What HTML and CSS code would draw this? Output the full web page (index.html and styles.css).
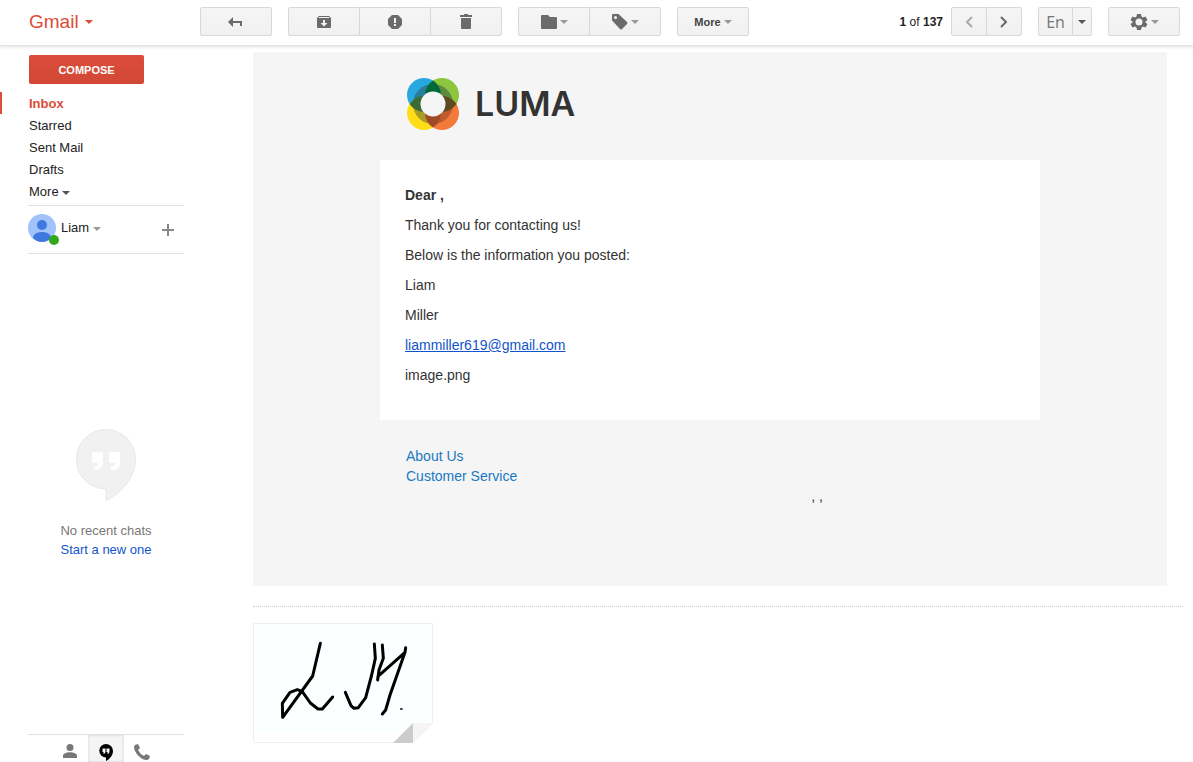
FILE: index.html
```
<!DOCTYPE html>
<html lang="en">
<head>
    <meta charset="UTF-8">
    <meta name="viewport" content="width=device-width, initial-scale=1.0">
    <title>Gmail</title>
    <link rel="stylesheet" href="styles.css">
</head>
<body>
    <!-- Top toolbar -->
    <header class="toolbar">
        <button class="brand">Gmail <span class="caret"></span></button>

        <div class="group">
            <button class="btn" aria-label="Back">
                <svg width="16" height="10" viewBox="0 0 16 10"><path d="M0 5l5-5v4h9v5h-2V6H5v4z"/></svg>
            </button>
        </div>
        <div class="group">
            <button class="btn" aria-label="Archive">
                <svg width="14" height="12" viewBox="0 0 14 12"><path fill-rule="evenodd" d="M2 0h10l2 2v9q0 1-1 1H1q-1 0-1-1V2zM2 1L1.500 2h11L12 1zM6 4v3H3.500L7 10.500 10.500 7H8V4z"/></svg>
            </button>
            <button class="btn" aria-label="Report spam">
                <svg width="14" height="14" viewBox="0 0 14 14"><path fill-rule="evenodd" d="M4 0h6l4 4v6l-4 4H4l-4-4V4zM6 3v5h2V3zM6 9v2h2V9z"/></svg>
            </button>
            <button class="btn" aria-label="Delete">
                <svg width="12" height="15" viewBox="0 0 12 15"><path d="M4 0h4v1h4v2H0V1h4zM1 4h10v10q0 1-1 1H2q-1 0-1-1z"/></svg>
            </button>
        </div>
        <div class="group">
            <button class="btn" aria-label="Move to">
                <svg width="16" height="14" viewBox="0 0 16 14"><path d="M1 0h6l2 2h6q1 0 1 1v10q0 1-1 1H1q-1 0-1-1V1q0-1 1-1z"/></svg>
                <span class="caret"></span>
            </button>
            <button class="btn" aria-label="Labels">
                <svg width="16" height="16" viewBox="0 0 16 16"><path fill-rule="evenodd" d="M1 0h5.500L15 8q1 1 0 2l-5 5q-1 1-2 0L.500 7Q0 6.500 0 6V1q0-1 1-1zM3.500 2a1.500 1.500 0 1 0 0 3 1.500 1.500 0 0 0 0-3z"/></svg>
                <span class="caret"></span>
            </button>
        </div>
        <div class="group">
            <button class="btn">More <span class="caret"></span></button>
        </div>

        <span class="counter"><b>1</b> of <b>137</b></span>
        <div class="group">
            <button class="btn small faded" aria-label="Newer">
                <svg width="8" height="12" viewBox="0 0 8 12"><path class="line" d="M7 1L2 6l5 5"/></svg>
            </button>
            <button class="btn small" aria-label="Older">
                <svg width="8" height="12" viewBox="0 0 8 12"><path class="line" d="M1 1l5 5-5 5"/></svg>
            </button>
        </div>
        <div class="group">
            <button class="btn lang">En</button>
            <button class="btn tiny" aria-label="Input tools"><span class="caret dark"></span></button>
        </div>
        <div class="group">
            <button class="btn" aria-label="Settings">
                <svg width="18" height="18" viewBox="0 0 18 18"><path fill-rule="evenodd" d="M7 1h4l.5 2.500 1.500 1 2.500-1 2 3.500-2 1.500v1l2 1.500-2 3.500-2.500-1-1.500 1L11 17H7l-.5-2.500-1.500-1-2.500 1L.500 11l2-1.500v-1L.500 7l2-3.500 2.500 1 1.500-1zM9 5.500a3.500 3.500 0 1 0 0 7 3.500 3.500 0 0 0 0-7z"/></svg>
                <span class="caret"></span>
            </button>
        </div>
    </header>

    <div class="page">
        <!-- Left column -->
        <aside class="sidebar">
            <button class="compose">COMPOSE</button>
            <nav class="folders">
                <a class="active" href="#">Inbox</a>
                <a href="#">Starred</a>
                <a href="#">Sent Mail</a>
                <a href="#">Drafts</a>
                <a href="#">More <span class="caret dark"></span></a>
            </nav>

            <div class="profile">
                <svg class="avatar" width="32" height="32" viewBox="0 0 32 32">
                    <circle cx="14" cy="14" r="14" fill="#a1c2fa"/>
                    <circle cx="14" cy="11" r="5" fill="#3f78e0"/>
                    <path d="M5 24c0-8 18-8 18 0q-4 4-9 4t-9-4z" fill="#3f78e0"/>
                    <circle cx="26" cy="26" r="5" fill="#34a81c"/>
                </svg>
                <button class="name">Liam <span class="caret"></span></button>
                <button class="add" aria-label="New chat">
                    <svg width="12" height="12" viewBox="0 0 12 12"><path d="M5 0h2v5h5v2H7v5H5V7H0V5h5z"/></svg>
                </button>
            </div>

            <div class="chats">
                <svg width="60" height="72" viewBox="0 0 60 72">
                    <path d="M30 .500a29.500 29.500 0 0 0 0 59.500v11.500C45 64 59.500 49 59.500 30A29.500 29.500 0 0 0 30 .500z" fill="#f1f1f1" stroke="#e8e8e8"/>
                    <path d="M16 25q0-2 2-2h7q2 0 2 2v9q0 7-9 7v-3q4 0 4-4h-4q-2 0-2-2zM33 25q0-2 2-2h7q2 0 2 2v9q0 7-9 7v-3q4 0 4-4h-4q-2 0-2-2z" fill="#fff"/>
                </svg>
                <p>No recent chats</p>
                <a href="#">Start a new one</a>
            </div>

            <div class="tabs">
                <button class="tab" aria-label="Contacts">
                    <svg width="14" height="14" viewBox="0 0 14 14"><circle cx="7" cy="3.500" r="3.500"/><path d="M0 14v-2c0-5 14-5 14 0v2z"/></svg>
                </button>
                <button class="tab selected" aria-label="Hangouts">
                    <svg width="14" height="17" viewBox="0 0 14 17"><path fill-rule="evenodd" d="M7 0a6.500 6.500 0 0 0 0 13.500V17c4-2 7-6 7-10A7 7 0 0 0 7 0zM3.500 4.500h3v3q0 2-2 2.500V8h-1zM7.500 4.500h3v3q0 2-2 2.500V8h-1z"/></svg>
                </button>
                <button class="tab" aria-label="Phone">
                    <svg width="16" height="16" viewBox="0 0 16 16"><path d="M1 1l3-1 2 4-2 2q2 4 6 6l2-2 4 2-1 3q-1 1-3 1C6 15 1 9 0 4q0-2 1-3z"/></svg>
                </button>
            </div>
        </aside>

        <!-- Open message -->
        <main class="content">
            <article class="mail">
                <div class="mail-inner">
                    <div class="luma">
                        <svg width="52" height="52" viewBox="0 0 52 52">
                            <circle cx="17" cy="17" r="17" fill="#27a8e0"/>
                            <circle cx="35" cy="17" r="17" fill="#8cc63f"/>
                            <circle cx="17" cy="35" r="17" fill="#ffde17"/>
                            <circle cx="35" cy="35" r="17" fill="#f37a3a"/>
                            <!-- inner ring, one quarter per colour -->
                            <path d="M26 26V6A20 20 0 0 0 6 26z" fill="#2a7d99"/>
                            <path d="M26 26h20A20 20 0 0 0 26 6z" fill="#5b8a3c"/>
                            <path d="M26 26H6a20 20 0 0 0 20 20z" fill="#aa9a28"/>
                            <path d="M26 26v20a20 20 0 0 0 20-20z" fill="#bf5b2c"/>
                            <!-- overlaps -->
                            <path d="M26 2.600a17 17 0 0 1 0 28.800 17 17 0 0 1 0-28.800z" fill="#00693a"/>
                            <path d="M2.600 26a17 17 0 0 1 28.800 0 17 17 0 0 1-28.800 0z" fill="#3a6b33"/>
                            <path d="M20.600 26a17 17 0 0 1 28.800 0 17 17 0 0 1-28.800 0z" fill="#5e4a20"/>
                            <path d="M26 20.600a17 17 0 0 1 0 28.800 17 17 0 0 1 0-28.800z" fill="#a04a28"/>
                            <circle cx="26" cy="26" r="12.500" fill="#f5f5f5"/>
                        </svg>
                        <span>LUMA</span>
                    </div>
                    <div class="card">
                        <p><b>Dear ,</b></p>
                        <p>Thank you for contacting us!</p>
                        <p>Below is the information you posted:</p>
                        <p>Liam</p>
                        <p>Miller</p>
                        <p><a href="mailto:liammiller619@gmail.com">liammiller619@gmail.com</a></p>
                        <p>image.png</p>
                    </div>
                    <div class="mail-footer">
                        <div class="links">
                            <a href="#">About Us</a>
                            <a href="#">Customer Service</a>
                        </div>
                        <p class="address">, ,</p>
                    </div>
                </div>
            </article>

            <!-- Attachment thumbnail with folded corner -->
            <section class="attachments">
                <svg class="thumb" viewBox="0 0 540 360" role="img" aria-label="Signature">
                    <path d="M1.500 1.500h537v300l-58 57H1.500z" fill="#fff" stroke="#eee" stroke-width="3"/>
                    <path d="M3 3h534v298h-57l-32 29H3z" fill="#fbffff"/>
                    <path d="M420 360l60-60v60z" fill="#ccc"/>
                    <path d="M480 300h60l-60 60z" fill="#f5f5f5"/>
                    <g class="ink">
                        <path d="M202 61l-23 98-90 124-1-42 23-33 22-8 15 6 24 34 23 18h13l31-36"/>
                        <path d="M277 208l17 40 9 8 13-2 22-30 18-68 11-50-3-43"/>
                        <path d="M388 66l3 40-13 35-4 30 1-11 81-72 2-14-2 14-45 128-13 45-10 12"/>
                        <path class="dot" d="M443 258h4"/>
                    </g>
                </svg>
            </section>
        </main>
    </div>
</body>
</html>
```

FILE: styles.css
```
* { margin: 0; padding: 0; box-sizing: border-box; }
body {
    min-height: 100vh;
    display: flex;
    flex-direction: column;
    background: #fff;
    color: #222;
    font-family: Arial, "Liberation Sans", sans-serif;
    font-size: 13px;
}
button { background: none; border: none; font: inherit; color: inherit; cursor: pointer; }
a { color: #15c; text-decoration: none; }
svg { display: block; flex: none; }
.caret {
    display: inline-block;
    border: 4px solid transparent;
    border-top-color: #999;
    border-bottom: none;
    vertical-align: middle;
}
.caret.dark { border-top-color: #555; }

/* Toolbar */
.toolbar {
    display: flex;
    align-items: center;
    gap: 16px;
    height: 46px;
    padding: 0 13px 2px 29px;
    border-bottom: 1px solid #e2e2e2;
    box-shadow: 0 1px 3px rgba(0, 0, 0, 0.12);
}
.brand {
    width: 155px;
    display: flex;
    align-items: center;
    gap: 6px;
    color: #dd4b39;
    font-size: 19px;
}
.brand .caret { border-top-color: #dd4b39; }
.group { display: flex; }
.btn {
    width: 72px;
    height: 29px;
    display: flex;
    align-items: center;
    justify-content: center;
    gap: 3px;
    border: 1px solid #d8d8d8;
    border-radius: 2px;
    background: linear-gradient(#f5f5f5, #f1f1f1);
    color: #444;
    font-size: 11px;
    font-weight: bold;
}
.btn + .btn { margin-left: -1px; border-top-left-radius: 0; border-bottom-left-radius: 0; }
.btn:hover { border-color: #c6c6c6; }
.btn svg { fill: #6b6b6b; }
.btn .line { fill: none; stroke: #6b6b6b; stroke-width: 2; }
.btn.small { width: 36px; }
.btn.tiny { width: 20px; }
.btn.faded .line { stroke: #aaa; }
.btn.lang { width: 35px; color: #777; font-family: "Open Sans", sans-serif; font-size: 16px; font-weight: normal; }
.counter { margin-left: auto; margin-right: -8px; font-size: 12px; }

/* Sidebar */
.page { flex: 1; display: flex; }
.sidebar { width: 253px; display: flex; flex-direction: column; align-items: flex-start; }
.compose {
    width: 115px;
    height: 29px;
    margin: 9px 0 8px 29px;
    border-radius: 2px;
    background: linear-gradient(#dd4b39, #d14836);
    color: #fff;
    font-size: 11px;
    font-weight: bold;
}
.folders { width: 100%; padding-bottom: 3px; }
.folders a { display: block; padding: 2px 0 0 29px; line-height: 20px; color: #222; }
.folders .active { padding-left: 27px; border-left: 2px solid #dd4b39; color: #dd4b39; font-weight: bold; }
.profile, .tabs { width: 156px; margin-left: 28px; display: flex; border-top: 1px solid #e0e0e0; }
.profile {
    height: 49px;
    padding: 8px 10px 0 0;
    align-items: flex-start;
    border-bottom: 1px solid #e0e0e0;
}
.name { line-height: 28px; padding-left: 1px; }
.add { margin: 10px 0 0 auto; }
.add svg { fill: #888; }
.chats {
    width: 156px;
    margin-left: 28px;
    flex: 1;
    display: flex;
    flex-direction: column;
    align-items: center;
    justify-content: center;
    color: #777;
    line-height: 19px;
}
.chats p { margin-top: 20px; }
.tabs { justify-content: center; height: 28px; }
.tab { width: 36px; display: flex; justify-content: center; padding-top: 9px; }
.tab svg { fill: #777; }
.tab.selected { background: #f5f5f5; box-shadow: inset 0 0 3px rgba(0, 0, 0, 0.15); }
.tab.selected svg { fill: #000; }

/* Message */
.content { flex: 1; padding: 6px 10px 0 0; }
.mail {
    min-height: 534px;
    margin-right: 16px;
    padding: 26px 20px;
    background: #f5f5f5;
    color: #333;
    font-size: 14px;
    line-height: 20px;
}
.mail-inner { max-width: 660px; margin: 0 auto; }
.luma {
    display: flex;
    align-items: center;
    gap: 16px;
    padding: 0 27px 30px;
    font-family: Inter, sans-serif;
    font-size: 34px;
    font-weight: 600;
}
.card { padding: 25px; background: #fff; }
.card p { margin-bottom: 10px; }
.card a { text-decoration: underline; }
.mail-footer { display: grid; grid-template-columns: 2fr 1fr; padding: 26px; }
.links a { display: block; color: #1979c3; }
.address { grid-area: 2 / 2; }
.attachments { margin-top: 20px; padding-top: 16px; border-top: 1px dotted #ccc; }
.thumb { width: 180px; height: 120px; }
.ink { fill: none; stroke: #000; stroke-width: 9; stroke-linecap: round; stroke-linejoin: round; }
.ink .dot { stroke-width: 5; }
```
